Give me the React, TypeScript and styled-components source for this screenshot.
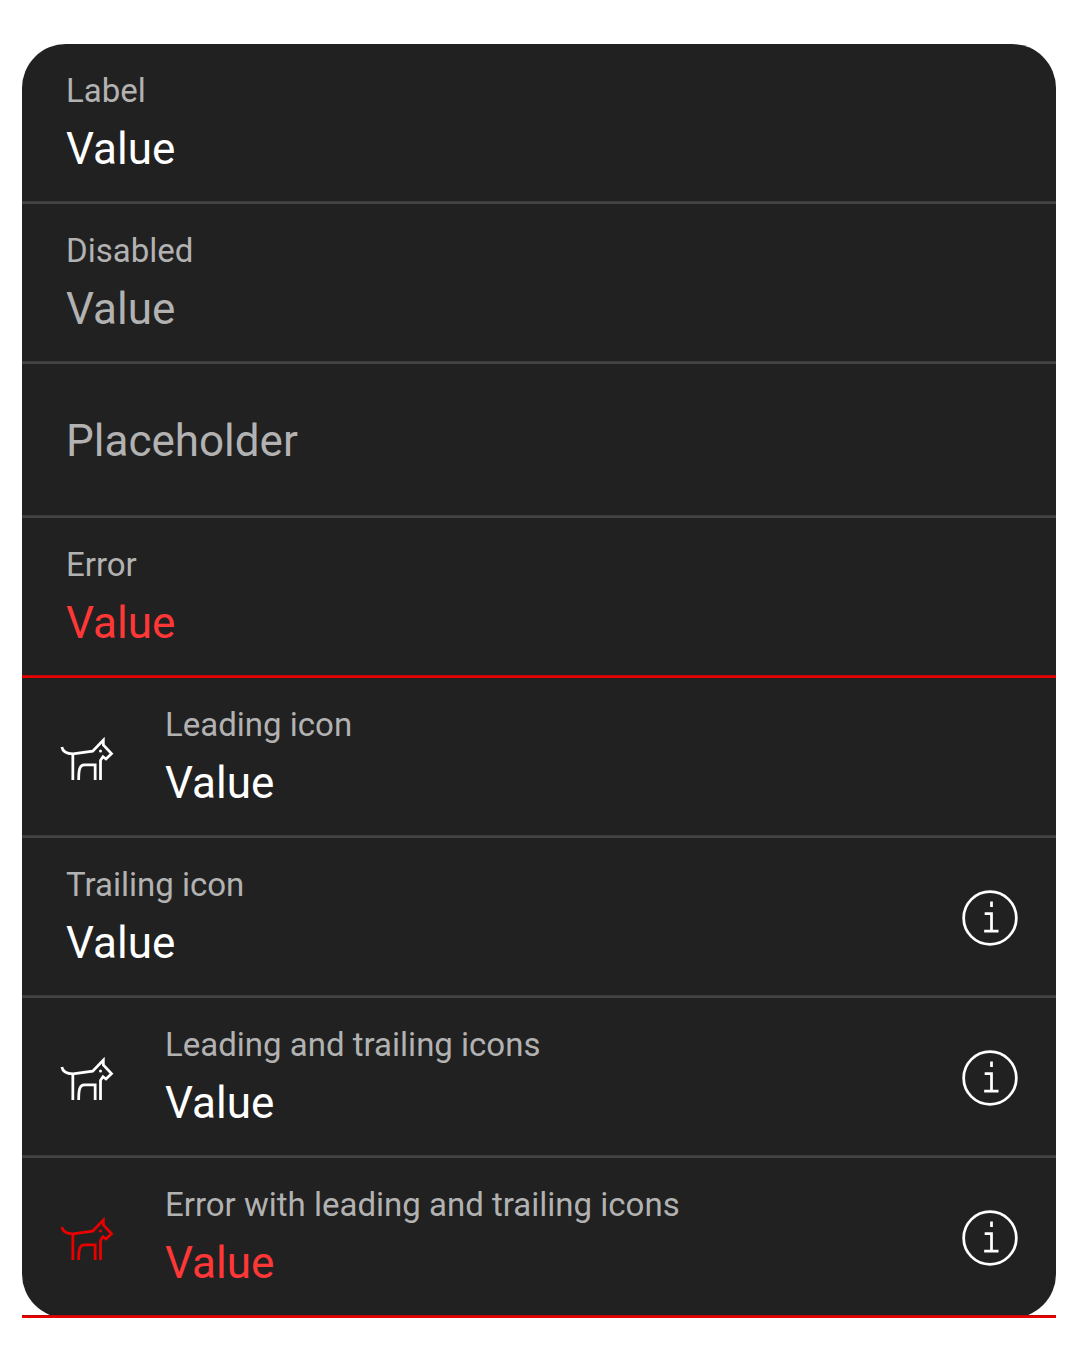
import React from "react";
import styled, { createGlobalStyle } from "styled-components";

const GlobalStyle = createGlobalStyle`
  body {
    margin: 0;
    background: #ffffff;
    font-family: Roboto, "Liberation Sans", sans-serif;
  }
`;

const Page = styled.main`
  box-sizing: border-box;
  height: 1362px;
  padding: 44px 22px;
`;

const List = styled.div`
  display: flex;
  flex-direction: column;
  border-radius: 44px;
  background: #212121;
`;

const Row = styled.div<{ $error?: boolean; $empty?: boolean }>`
  box-sizing: border-box;
  display: flex;
  align-items: center;
  height: ${(p) => (p.$empty ? 154 : 160)}px;
  background: ${(p) =>
      p.$error
        ? "linear-gradient(#b80808 1px, #eb0000 1px)"
        : "linear-gradient(#3b3b3b 1px, #434343 1px)"}
    bottom / 100% 3px no-repeat;
`;

const Leading = styled.span<{ $error?: boolean }>`
  display: flex;
  width: 66px;
  margin-left: 32px;
  color: ${(p) => (p.$error ? "#eb0000" : "#ffffff")};
`;

const Trailing = styled.span`
  display: flex;
  margin-right: 33px;
  color: #ffffff;
`;

const Texts = styled.div<{ $inset?: boolean }>`
  flex: 1;
  display: flex;
  flex-direction: column;
  padding-left: ${(p) => (p.$inset ? 45 : 44)}px;
`;

const Label = styled.span`
  font-size: 33px;
  line-height: 44px;
  color: #b2b2b2;
`;

const Value = styled.span<{ $tone?: string }>`
  margin-top: 6px;
  font-size: 44px;
  line-height: 60px;
  color: ${(p) => p.$tone || "#ffffff"};
`;

const Placeholder = styled(Value)`
  margin-top: 0;
`;

const Dog = () => (
  <svg width="66" height="66" viewBox="12 0 198 198" fill="none" stroke="currentColor" strokeWidth="8.25">
    <path d="M35.500 66C38 79 50 86.500 68.500 86.500L128 78.500L160 45.500V60L184.500 86L168 102L159 95L151.500 106V165" />
    <path d="M68.500 86V165M86 165C86 137 88 119.500 103 119.500H135.500V165" />
    <circle cx="151.500" cy="78" r="4.500" fill="currentColor" stroke="none" />
  </svg>
);

const Info = () => (
  <svg width="66" height="66" viewBox="21 15 198 198" fill="none" stroke="currentColor" strokeWidth="8.25">
    <circle cx="120" cy="114" r="79" />
    <path d="M124.500 64.500V81M104 100.500H124.500V153M102.500 153H145.500" />
  </svg>
);

interface Field {
  label?: string;
  value: string;
  disabled?: boolean;
  error?: boolean;
  leading?: boolean;
  trailing?: boolean;
}

const fields: Field[] = [
  { label: "Label", value: "Value" },
  { label: "Disabled", value: "Value", disabled: true },
  { value: "Placeholder" },
  { label: "Error", value: "Value", error: true },
  { label: "Leading icon", value: "Value", leading: true },
  { label: "Trailing icon", value: "Value", trailing: true },
  { label: "Leading and trailing icons", value: "Value", leading: true, trailing: true },
  {
    label: "Error with leading and trailing icons",
    value: "Value",
    error: true,
    leading: true,
    trailing: true,
  },
];

export default function App() {
  return (
    <>
      <GlobalStyle />
      <Page>
        <List>
          {fields.map((f, i) => (
            <Row key={i} $error={f.error} $empty={!f.label}>
              {f.leading && (
                <Leading $error={f.error}>
                  <Dog />
                </Leading>
              )}
              <Texts $inset={f.leading}>
                {f.label ? (
                  <>
                    <Label>{f.label}</Label>
                    <Value $tone={f.error ? "#ff3737" : f.disabled ? "#b2b2b2" : undefined}>
                      {f.value}
                    </Value>
                  </>
                ) : (
                  <Placeholder $tone="#b2b2b2">{f.value}</Placeholder>
                )}
              </Texts>
              {f.trailing && (
                <Trailing>
                  <Info />
                </Trailing>
              )}
            </Row>
          ))}
        </List>
      </Page>
    </>
  );
}
